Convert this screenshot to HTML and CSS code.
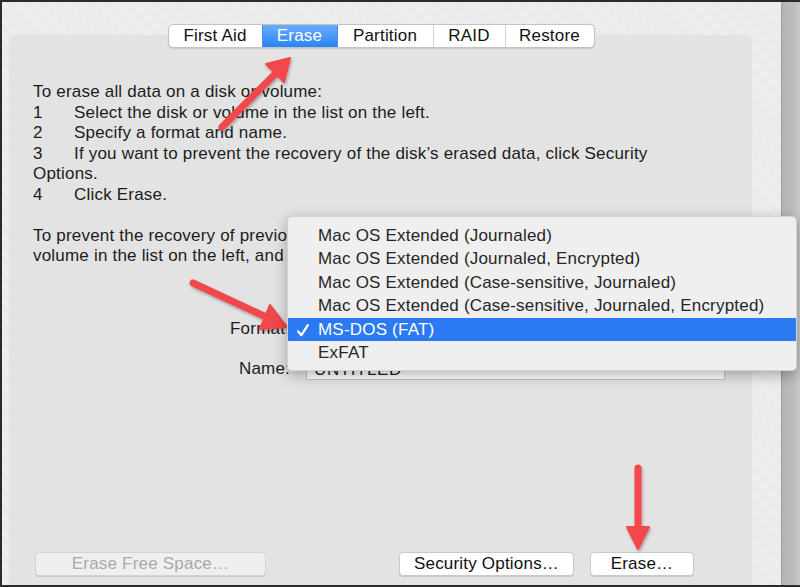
FILE: index.html
```html
<!DOCTYPE html>
<html lang="en">
<head>
    <meta charset="UTF-8">
    <title>Disk Utility - Erase</title>
    <link rel="stylesheet" href="styles.css">
</head>
<body>

<div class="screen">
    <div class="desk">
        <div class="tabs">
            <span class="tab tab-first">First Aid</span>
            <span class="tab tab-erase active">Erase</span>
            <span class="tab tab-partition">Partition</span>
            <span class="tab tab-raid">RAID</span>
            <span class="tab tab-restore">Restore</span>
        </div>

        <div class="panel">
            <div class="help">
                <p>To erase all data on a disk or volume:<br>
                <span class="num">1</span>Select the disk or volume in the list on the left.<br>
                <span class="num">2</span>Specify a format and name.<br>
                <span class="num">3</span>If you want to prevent the recovery of the disk’s erased data, click Security Options.<br>
                <span class="num">4</span>Click Erase.</p>
                <p>To prevent the recovery of previously erased files without erasing the disk, select the volume in the list on the left, and click Erase Free Space.</p>
            </div>

            <div class="fields">
                <div class="field">
                    <label>Format:</label>
                    <div class="popup">MS-DOS (FAT)</div>
                </div>
                <div class="field">
                    <label>Name:</label>
                    <div class="textfield">UNTITLED</div>
                </div>
            </div>

            <div class="actions">
                <button class="btn btn-free" disabled>Erase Free Space…</button>
                <span class="spacer"></span>
                <button class="btn btn-security">Security Options…</button>
                <button class="btn btn-erase">Erase…</button>
            </div>

            <!-- the Format popup, opened -->
            <ul class="menu">
                <li>Mac OS Extended (Journaled)</li>
                <li>Mac OS Extended (Journaled, Encrypted)</li>
                <li>Mac OS Extended (Case-sensitive, Journaled)</li>
                <li>Mac OS Extended (Case-sensitive, Journaled, Encrypted)</li>
                <li class="selected">
                    <svg class="check" width="12" height="13" viewBox="0 0 12 13">
                        <path d="M1.2 7.4 L4.4 11.2 L10.8 1.2" fill="none" stroke="#fff" stroke-width="2.3" stroke-linecap="round" stroke-linejoin="round"/>
                    </svg>MS-DOS (FAT)</li>
                <li>ExFAT</li>
            </ul>
        </div>
    </div>
    <div class="scroller"></div>

    <!-- callout arrows drawn over the screenshot -->
    <svg class="arrows" width="800" height="587" viewBox="0 0 800 587">
        <defs>
            <filter id="shade" x="-20%" y="-20%" width="140%" height="140%">
                <feDropShadow dx="1" dy="2" stdDeviation="1.5" flood-color="#000" flood-opacity="0.3"/>
            </filter>
        </defs>
        <g fill="#f2474b" stroke="#f2474b" filter="url(#shade)">
            <line x1="222" y1="127" x2="276" y2="73" stroke-width="7" stroke-linecap="round"/>
            <polygon points="290,58 284,82 266,64" stroke-width="2" stroke-linejoin="round"/>

            <line x1="193" y1="283" x2="264" y2="316" stroke-width="7" stroke-linecap="round"/>
            <polygon points="287,327 260,329 270,305" stroke-width="2" stroke-linejoin="round"/>

            <line x1="638" y1="468" x2="638" y2="528" stroke-width="7" stroke-linecap="round"/>
            <polygon points="638,549 627,527 649,527" stroke-width="2" stroke-linejoin="round"/>
        </g>
    </svg>
</div>

</body>
</html>
```

FILE: styles.css
```css
body {
    margin: 0;
    font-family: "Liberation Sans", Arial, sans-serif;
    font-size: 17px;
    letter-spacing: 0.2px;
    color: #1c1c1c;
}
.screen {
    position: relative;
    display: flex;
    width: 800px;
    height: 587px;
    box-sizing: border-box;
    border-top: 2px solid #2b2b2b;
    border-left: 2px solid #2b2b2b;
    border-bottom: 2px solid #2b2b2b;
    overflow: hidden;
}
.desk {
    flex: 1;
    display: flex;
    flex-direction: column;
    padding: 22px 29px 0 7px;
    background: repeating-linear-gradient(45deg, #efefef 0 1px, #e9e9e9 1px 2px);
}
.scroller {
    width: 19px;
    background: linear-gradient(90deg, #9a9a9a 0, #b6b6b6 2px, #bcbcbc 12px, #c9c9c9 19px);
}

/* segmented tabs */
.tabs {
    position: relative;
    z-index: 1;
    display: flex;
    align-self: center;
    height: 24px;
    margin-bottom: -13px;
    margin-left: 1px;
    border: 1px solid #c3c3c3;
    border-radius: 5px;
    background: #fff;
    box-shadow: 0 1px 1px rgba(0, 0, 0, 0.12);
    box-sizing: border-box;
    overflow: hidden;
}
.tab {
    display: flex;
    align-items: center;
    justify-content: center;
    border-left: 1px solid #d2d2d2;
    color: #111;
}
.tab-first { width: 93px; border-left: none; }
.tab-erase { width: 74px; }
.tab-partition { width: 95px; }
.tab-raid { width: 71px; }
.tab-restore { width: 88px; }
.tab.active {
    color: #fff;
    border-left-color: #3f8ef5;
    background: linear-gradient(#6aaefb, #2a83f3);
}
.tab.active + .tab {
    border-left-color: #3f8ef5;
}

/* panel */
.panel {
    position: relative;
    flex: 1;
    display: flex;
    flex-direction: column;
    padding: 47px 0 9px;
    background: #e3e3e3;
    border-radius: 6px 6px 0 0;
}
.help {
    padding: 0 0 0 24px;
    width: 665px;
    line-height: 20.5px;
}
.help p {
    margin: 0 0 20.5px;
}
.help p:last-child {
    margin-bottom: 0;
}
.num {
    display: inline-block;
    width: 41px;
}

/* format / name rows */
.fields {
    display: grid;
    grid-template-columns: 257px 419px;
    column-gap: 16px;
    row-gap: 17px;
    margin-top: 50px;
    padding-left: 24px;
}
.field {
    display: contents;
}
.field label {
    text-align: right;
    line-height: 23px;
}
.popup, .textfield {
    height: 23px;
    line-height: 23px;
    box-sizing: border-box;
    padding: 0 7px;
    background: #fff;
    border: 1px solid #c4c4c4;
}
.popup {
    width: 200px;
    border-radius: 4px;
}
.textfield {
    box-shadow: inset 0 1px 1px rgba(0, 0, 0, 0.1);
    letter-spacing: 0.6px;
}

/* opened popup menu */
.menu {
    position: absolute;
    left: 278px;
    top: 181px;
    z-index: 2;
    width: 510px;
    margin: 0;
    padding: 7px 0 6px;
    list-style: none;
    background: #efefef;
    border-radius: 5px;
    border: 1px solid rgba(0, 0, 0, 0.12);
    box-sizing: border-box;
    box-shadow: 0 4px 14px rgba(0, 0, 0, 0.3);
    color: #262626;
}
.menu li {
    position: relative;
    height: 23.4px;
    line-height: 23.4px;
    padding-left: 30px;
}
.menu li.selected {
    background: #2b7af1;
    color: #fff;
}
.check {
    position: absolute;
    left: 9px;
    top: 6px;
}

/* bottom buttons */
.actions {
    display: flex;
    gap: 16px;
    margin-top: auto;
    padding: 0 58px 0 26px;
}
.spacer {
    flex: 1;
}
.btn {
    height: 24px;
    padding: 0;
    font-family: inherit;
    font-size: 17px;
    letter-spacing: 0.2px;
    color: #111;
    background: #fff;
    border: 1px solid #c9c9c9;
    border-radius: 4px;
    box-shadow: 0 1px 0 rgba(0, 0, 0, 0.12);
}
.btn-free {
    width: 231px;
    color: #a9a9a9;
    background: #efefef;
    border-color: #d3d3d3;
}
.btn-security { width: 175px; }
.btn-erase { width: 104px; }

.arrows {
    position: absolute;
    left: -2px;
    top: -2px;
    pointer-events: none;
}
```
